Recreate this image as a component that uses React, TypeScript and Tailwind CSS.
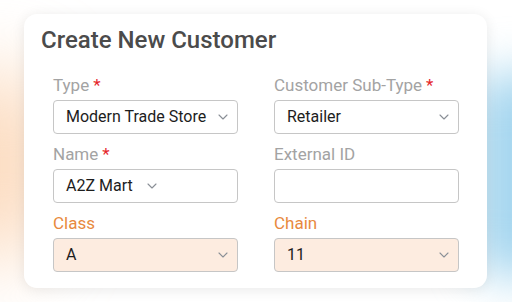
import type { ReactNode } from 'react'

function Chevron() {
  return (
    <svg width="10" height="6" viewBox="0 0 10 6" fill="none" className="shrink-0">
      <path d="M1 1l4 4 4-4" stroke="#8a8f96" strokeWidth="1.1" strokeLinecap="round" strokeLinejoin="round" />
    </svg>
  )
}

function Field({ label, required, accent, children }: { label: string; required?: boolean; accent?: boolean; children: ReactNode }) {
  return (
    <div className="flex flex-col">
      <div className={`text-[17px] leading-[22px] h-[22px] ${accent ? 'text-[#e8893e]' : 'text-[#a3a3a3]'}`}>
        {label}
        {required && <span className="text-[#e5262b] ml-[4px]">*</span>}
      </div>
      <div className="mt-[4px]">{children}</div>
    </div>
  )
}

function Select({ value, accent }: { value: string; accent?: boolean }) {
  return (
    <div className={`h-[34px] flex items-center justify-between pl-[12px] pr-[9px] rounded-[4px] border border-[#c6c6c6] text-[16px] text-[#1d1d1d] ${accent ? 'bg-[#fdece0]' : 'bg-white'}`}>
      <span>{value}</span>
      <Chevron />
    </div>
  )
}

export default function App() {
  return (
    <div className="relative w-[512px] h-[302px] overflow-hidden bg-white font-['Roboto',sans-serif]">
      <div className="absolute left-[-50px] top-[70px] w-[90px] h-[190px] rounded-full bg-[#fbd4b2] blur-2xl" />
      <div className="absolute right-[-40px] top-[70px] w-[75px] h-[210px] rounded-full bg-[#9fd3ee] blur-xl" />
      <div className="relative ml-[24px] mt-[14px] w-[463px] h-[274px] rounded-[13px] bg-white shadow-[0_2px_14px_rgba(0,0,0,0.09)] pl-[29px] pr-[28px] pt-[12px]">
        <h1 className="-ml-[12px] text-[24px] leading-[28px] font-medium text-[#4b4b4b]">Create New Customer</h1>
        <div className="mt-[20px] grid grid-cols-2 gap-x-[36px] gap-y-[9px]">
          <Field label="Type" required>
            <Select value="Modern Trade Store" />
          </Field>
          <Field label="Customer Sub-Type" required>
            <Select value="Retailer" />
          </Field>
          <Field label="Name" required>
            <div className="h-[34px] flex items-center gap-[14px] pl-[12px] rounded-[4px] border border-[#c6c6c6] text-[16px] text-[#1d1d1d] bg-white">
              <span>A2Z Mart</span>
              <Chevron />
            </div>
          </Field>
          <Field label="External ID">
            <div className="h-[34px] rounded-[4px] border border-[#c6c6c6] bg-white" />
          </Field>
          <Field label="Class" accent>
            <Select value="A" accent />
          </Field>
          <Field label="Chain" accent>
            <Select value="11" accent />
          </Field>
        </div>
      </div>
    </div>
  )
}
